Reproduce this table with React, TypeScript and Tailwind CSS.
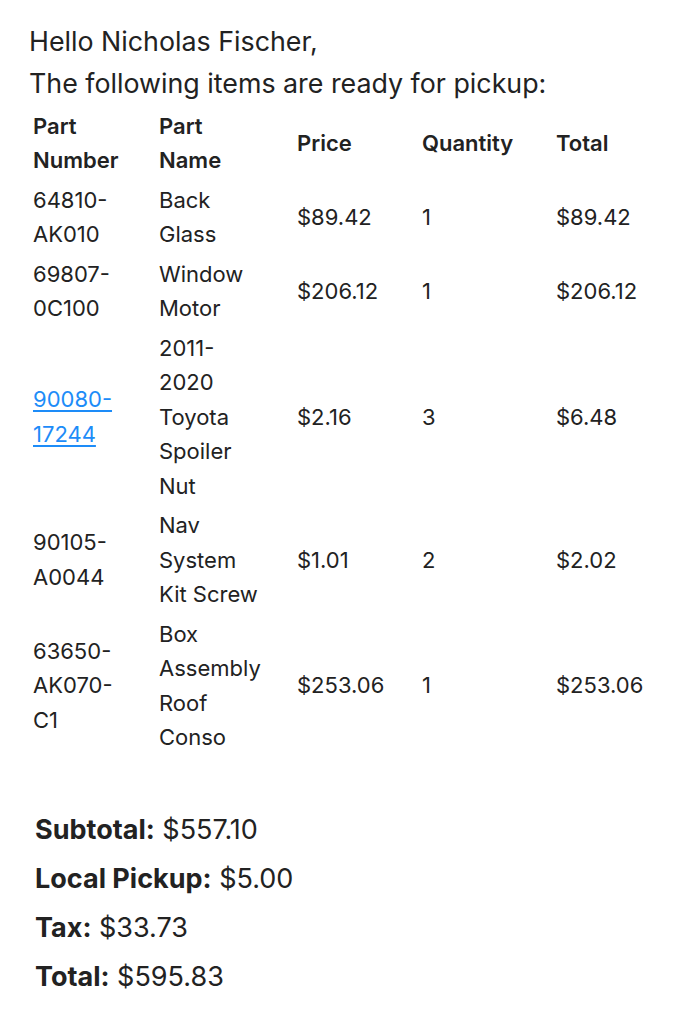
const items = [
  { number: ['64810-', 'AK010'], name: ['Back', 'Glass'], price: '$89.42', qty: '1', total: '$89.42' },
  { number: ['69807-', '0C100'], name: ['Window', 'Motor'], price: '$206.12', qty: '1', total: '$206.12' },
  {
    number: ['90080-', '17244'],
    name: ['2011-', '2020', 'Toyota', 'Spoiler', 'Nut'],
    price: '$2.16',
    qty: '3',
    total: '$6.48',
    link: true,
  },
  { number: ['90105-', 'A0044'], name: ['Nav', 'System', 'Kit Screw'], price: '$1.01', qty: '2', total: '$2.02' },
  {
    number: ['63650-', 'AK070-', 'C1'],
    name: ['Box', 'Assembly', 'Roof', 'Conso'],
    price: '$253.06',
    qty: '1',
    total: '$253.06',
  },
]

const summary = [
  { label: 'Subtotal:', value: '$557.10' },
  { label: 'Local Pickup:', value: '$5.00' },
  { label: 'Tax:', value: '$33.73' },
  { label: 'Total:', value: '$595.83' },
]

function Lines({ lines }: { lines: string[] }) {
  return (
    <>
      {lines.map((line, i) => (
        <span key={i} className="block">
          {line}
        </span>
      ))}
    </>
  )
}

export default function App() {
  return (
    <div
      className="min-h-[1024px] bg-white px-[29px] pt-[20px] text-[#222222]"
      style={{ fontFamily: 'Inter, "Noto Sans", sans-serif' }}
    >
      <p className="text-[26.8px] leading-[42px]">Hello Nicholas Fischer,</p>
      <p className="text-[26.8px] leading-[42px]">The following items are ready for pickup:</p>

      {/* Items table */}
      <table className="mt-[2px] w-[633px] table-fixed text-left text-[22px] leading-[34.5px]">
        <thead>
          <tr>
            <th className="w-[126px] py-[2.5px] pl-[4px] align-middle font-semibold">
              <Lines lines={['Part', 'Number']} />
            </th>
            <th className="w-[138px] py-[2.5px] pl-[4px] align-middle font-semibold">
              <Lines lines={['Part', 'Name']} />
            </th>
            <th className="w-[125px] py-[2.5px] pl-[4px] align-middle font-semibold">Price</th>
            <th className="w-[134px] py-[2.5px] pl-[4px] align-middle font-semibold">Quantity</th>
            <th className="py-[2.5px] pl-[4px] align-middle font-semibold">Total</th>
          </tr>
        </thead>
        <tbody>
          {items.map((item) => (
            <tr key={item.number.join('')}>
              <td className="py-[2.5px] pl-[4px] align-middle">
                {item.link ? (
                  <a href="#" className="text-[#1d8cf8] underline underline-offset-[3px]">
                    <Lines lines={item.number} />
                  </a>
                ) : (
                  <Lines lines={item.number} />
                )}
              </td>
              <td className="py-[2.5px] pl-[4px] align-middle">
                <Lines lines={item.name} />
              </td>
              <td className="py-[2.5px] pl-[4px] align-middle">{item.price}</td>
              <td className="py-[2.5px] pl-[4px] align-middle">{item.qty}</td>
              <td className="py-[2.5px] pl-[4px] align-middle">{item.total}</td>
            </tr>
          ))}
        </tbody>
      </table>

      {/* Summary */}
      <div className="mt-[48px] pl-[6px] text-[27px] leading-[49px]">
        {summary.map((row) => (
          <p key={row.label}>
            <span className="font-bold">{row.label}</span> {row.value}
          </p>
        ))}
      </div>
    </div>
  )
}
